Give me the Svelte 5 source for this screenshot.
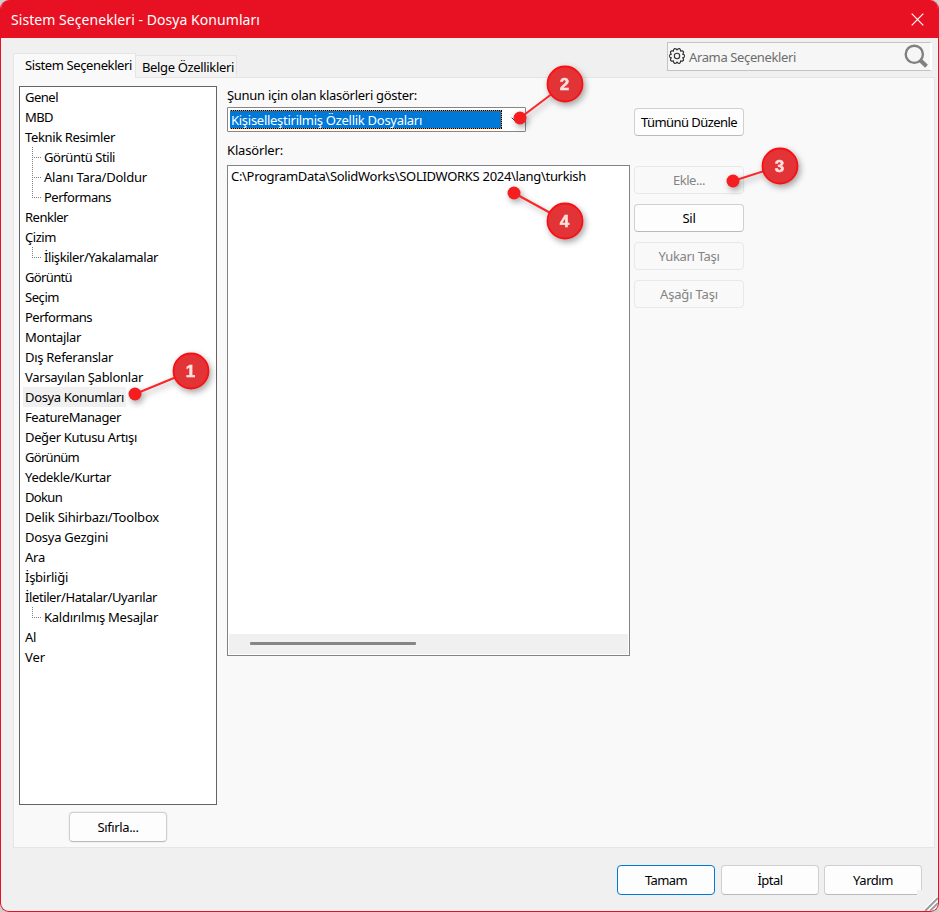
<script lang="ts">
  interface TreeItem {
    label: string;
    child?: boolean;
    last?: boolean;
    width: number;
  }

  // width is the rendered label width in px
  const items: TreeItem[] = [
    { label: 'Genel', width: 33 },
    { label: 'MBD', width: 28 },
    { label: 'Teknik Resimler', width: 90 },
    { label: 'Görüntü Stili', child: true, width: 71 },
    { label: 'Alanı Tara/Doldur', child: true, width: 103 },
    { label: 'Performans', child: true, last: true, width: 67 },
    { label: 'Renkler', width: 43 },
    { label: 'Çizim', width: 31 },
    { label: 'İlişkiler/Yakalamalar', child: true, last: true, width: 114 },
    { label: 'Görüntü', width: 47 },
    { label: 'Seçim', width: 34 },
    { label: 'Performans', width: 67 },
    { label: 'Montajlar', width: 56 },
    { label: 'Dış Referanslar', width: 88 },
    { label: 'Varsayılan Şablonlar', width: 118 },
    { label: 'Dosya Konumları', width: 99 },
    { label: 'FeatureManager', width: 96 },
    { label: 'Değer Kutusu Artışı', width: 112 },
    { label: 'Görünüm', width: 54 },
    { label: 'Yedekle/Kurtar', width: 86 },
    { label: 'Dokun', width: 37 },
    { label: 'Delik Sihirbazı/Toolbox', width: 134 },
    { label: 'Dosya Gezgini', width: 83 },
    { label: 'Ara', width: 20 },
    { label: 'İşbirliği', width: 43 },
    { label: 'İletiler/Hatalar/Uyarılar', width: 132 },
    { label: 'Kaldırılmış Mesajlar', child: true, last: true, width: 114 },
    { label: 'Al', width: 11 },
    { label: 'Ver', width: 20 },
  ];

  const callouts = [
    { n: 1, x: 191, y: 371, dx: 135, dy: 394 },
    { n: 2, x: 565, y: 84, dx: 520, dy: 118 },
    { n: 3, x: 780, y: 166, dx: 733, dy: 181 },
    { n: 4, x: 565, y: 221, dx: 514, dy: 193 },
  ];

  let selected = $state(15);

  // spreads the letters so that a label takes exactly the given width
  function fit(node: HTMLElement, width: number) {
    const natural = node.getBoundingClientRect().width;
    const count = (node.textContent ?? '').length;
    if (count > 0) node.style.letterSpacing = `${(width - natural) / count}px`;
  }

  // gear outline: ten rounded teeth
  const gear = Array.from({ length: 101 }, (_, i) => {
    const a = (i / 100) * Math.PI * 2;
    const r = 6.1 + 1.6 * Math.abs(Math.cos(a * 5));
    return `${i ? 'L' : 'M'}${(8 + r * Math.cos(a)).toFixed(2)} ${(8 + r * Math.sin(a)).toFixed(2)}`;
  }).join('') + 'Z';
</script>

<div class="backdrop">
  <div class="dialog">
    <header class="titlebar">
      <span class="title"><span use:fit={249}>Sistem Seçenekleri - Dosya Konumları</span></span>
      <svg class="close" width="13" height="13" viewBox="0 0 13 13">
        <path d="M.7.7l11.6 11.6M12.3.7L.7 12.3" stroke="#fff" stroke-width="1.2" />
      </svg>
    </header>

    <div class="top">
      <div class="tabs">
        <div class="tab active"><span use:fit={107}>Sistem Seçenekleri</span></div>
        <div class="tab"><span use:fit={92}>Belge Özellikleri</span></div>
      </div>
      <div class="search">
        <svg class="gear" width="16" height="16" viewBox="0 0 16 16" fill="none" stroke="#333">
          <path d={gear} stroke-width="1.2" />
          <circle cx="8" cy="8" r="2.7" stroke-width="1.1" />
        </svg>
        <span class="placeholder"><span use:fit={107}>Arama Seçenekleri</span></span>
        <svg class="lens" width="24" height="24" viewBox="0 0 24 24" fill="none" stroke="#808080">
          <circle cx="10.3" cy="10.3" r="8.6" stroke-width="2.4" />
          <path d="M16.5 16.5l6 5.8" stroke-width="4" />
        </svg>
      </div>
    </div>

    <main class="page">
      <div class="sidebar">
        <ul class="tree">
          {#each items as item, i}
            <!-- svelte-ignore a11y_click_events_have_key_events, a11y_no_noninteractive_element_interactions -->
            <li class:child={item.child} onclick={() => (selected = i)}>
              {#if item.child}
                <svg class="branch" width="10" height="20" viewBox="0 0 10 20">
                  <path d={item.last ? 'M.5 0V11' : 'M.5 0V20'} />
                  <path d="M0 10.5H10" />
                </svg>
              {/if}
              <span class="label" class:selected={i === selected}><span use:fit={item.width}>{item.label}</span></span>
            </li>
          {/each}
        </ul>
        <button class="wide reset"><span use:fit={41}>Sıfırla...</span></button>
      </div>

      <div class="folders">
        <div class="caption"><span use:fit={190}>Şunun için olan klasörleri göster:</span></div>
        <div class="select">
          <div class="value"><span use:fit={191}>Kişiselleştirilmiş Özellik Dosyaları</span></div>
          <svg width="10" height="6" viewBox="0 0 10 6">
            <path d="M.7.7L5 5 9.3.7" fill="none" stroke="#444" />
          </svg>
        </div>
        <div class="caption second"><span use:fit={56}>Klasörler:</span></div>
        <div class="list">
          <div class="path"><span use:fit={355}>C:\ProgramData\SolidWorks\SOLIDWORKS 2024\lang\turkish</span></div>
          <div class="scrollbar"><div class="thumb"></div></div>
        </div>
      </div>

      <div class="actions">
        <button class="edit"><span use:fit={96}>Tümünü Düzenle</span></button>
        <button disabled><span use:fit={32}>Ekle...</span></button>
        <button><span use:fit={13}>Sil</span></button>
        <button disabled><span use:fit={61}>Yukarı Taşı</span></button>
        <button disabled><span use:fit={58}>Aşağı Taşı</span></button>
      </div>
    </main>

    <footer class="footer">
      <button class="wide primary"><span use:fit={42}>Tamam</span></button>
      <button class="wide"><span use:fit={25}>İptal</span></button>
      <button class="wide help"><span use:fit={40}>Yardım</span></button>
    </footer>

    <svg class="grip" width="14" height="14" viewBox="0 0 14 14">
      <path d="M0 14L14 0M5 14L14 5M10 14L14 10" stroke="#fff" stroke-width="3" />
      <path d="M1 14L14 1M6 14L14 6M11 14L14 11" stroke="#999" stroke-width="1.9" />
    </svg>
  </div>

  <svg class="callouts" width="939" height="912" viewBox="0 0 939 912">
    {#each callouts as c}
      <g class="callout">
        <line x1={c.dx} y1={c.dy} x2={c.x} y2={c.y} />
        <circle class="dot" cx={c.dx} cy={c.dy} r="6.5" />
        <circle class="ball" cx={c.x} cy={c.y} r="17.5" />
        <text x={c.x - 0.5} y={c.y + 6}>{c.n}</text>
      </g>
    {/each}
  </svg>
</div>

<style>
  :global(body) {
    margin: 0;
    overflow: hidden;
  }

  .backdrop {
    position: relative;
    width: 939px;
    height: 912px;
    background: #d0d0d0;
    font-family: 'Noto Sans', 'Open Sans', sans-serif;
    font-size: 13px;
    color: #000;
  }

  .dialog {
    position: relative;
    display: flex;
    flex-direction: column;
    box-sizing: border-box;
    width: 939px;
    height: 912px;
    background: #f0f0f0;
    border: 1px solid #e81123;
    border-top: none;
    border-radius: 9px;
    overflow: hidden;
  }

  span {
    white-space: pre;
  }

  .titlebar {
    display: flex;
    align-items: center;
    justify-content: space-between;
    height: 38px;
    flex: none;
    padding: 1px 14px 0 10px;
    box-sizing: border-box;
    background: #e81123;
    color: #fff;
    font-size: 14px;
  }

  .top {
    display: flex;
    justify-content: space-between;
    height: 39px;
    flex: none;
    padding-left: 12px;
    padding-right: 6px;
  }

  .tabs {
    display: flex;
    align-items: flex-end;
  }

  .tab {
    box-sizing: border-box;
    height: 22px;
    line-height: 22px;
    width: 101px;
    padding-left: 6px;
    background: #f3f3f3;
    border: 1px solid #e5e5e5;
    border-left: none;
    border-bottom: none;
  }

  .tab.active {
    position: relative;
    z-index: 1;
    width: 123px;
    height: 25px;
    margin-bottom: -1px;
    padding-left: 11px;
    line-height: 23px;
    background: #f9f9f9;
    border-left: 1px solid #e5e5e5;
  }

  .search {
    display: flex;
    align-items: center;
    box-sizing: border-box;
    width: 265px;
    height: 29px;
    margin-top: 4px;
    padding-left: 1px;
    border: 1px solid #c3c3c3;
    border-right: 2px solid #fff;
    background: #f6f6f6;
  }

  .gear {
    margin-bottom: 1px;
  }

  .placeholder {
    margin-left: 4px;
    flex: 1;
    color: #6d6d6d;
  }

  .lens {
    margin-right: 2px;
    margin-bottom: 1px;
  }

  .page {
    display: flex;
    align-items: flex-start;
    box-sizing: border-box;
    width: 922px;
    height: 771px;
    margin-left: 12px;
    flex: none;
    padding: 8px 0 0 5px;
    background: #f9f9f9;
    border: 1px solid #e5e5e5;
  }

  .tree {
    box-sizing: border-box;
    width: 198px;
    height: 719px;
    margin: 0;
    padding: 0 0 0 3px;
    list-style: none;
    background: #fff;
    border: 1px solid #646464;
  }

  .tree li {
    display: flex;
    height: 20px;
    line-height: 20px;
    cursor: default;
  }

  .tree li.child {
    padding-left: 9px;
  }

  .branch {
    flex: none;
  }

  .branch path {
    stroke: #808080;
    stroke-dasharray: 1 1;
  }

  .label {
    padding: 0 2px;
  }

  .label.selected {
    background: #f0f0f0;
  }

  button {
    box-sizing: border-box;
    width: 110px;
    height: 28px;
    padding: 0;
    font: inherit;
    color: #000;
    background: #fdfdfd;
    border: 1px solid #d0d0d0;
    border-bottom-color: #bababa;
    border-radius: 4px;
  }

  button:disabled {
    color: #838383;
    background: #f9f9f9;
    border-color: #e8e8e8;
  }

  button.wide {
    width: 98px;
    height: 30px;
  }

  .reset {
    display: block;
    margin: 7px 0 0 50px;
    box-shadow: 0 0 0 1px #f0f0f0;
  }

  .folders {
    width: 403px;
    margin-left: 10px;
  }

  .caption {
    height: 21px;
    line-height: 18px;
  }

  .caption.second {
    height: 33px;
    line-height: 37px;
  }

  .select {
    display: flex;
    align-items: center;
    box-sizing: border-box;
    width: 299px;
    height: 25px;
    padding-left: 2px;
    background: #fff;
    border: 1px solid #868686;
    border-radius: 1px;
  }

  .value {
    box-sizing: border-box;
    width: 272px;
    height: 19px;
    margin-right: 9px;
    padding-left: 1px;
    line-height: 21px;
    background:
      repeating-linear-gradient(90deg, #ff8728 0 1px, #000 1px 2px) top / 100% 1px no-repeat,
      repeating-linear-gradient(90deg, #ff8728 0 1px, #000 1px 2px) bottom / 100% 1px no-repeat,
      repeating-linear-gradient(#ff8728 0 1px, #000 1px 2px) right / 1px 100% no-repeat,
      #0078d7;
    color: #fff;
  }

  .list {
    display: flex;
    flex-direction: column;
    justify-content: space-between;
    box-sizing: border-box;
    width: 403px;
    height: 491px;
    padding: 1px;
    background: #fff;
    border: 1px solid #828287;
  }

  .path {
    padding-left: 2px;
    line-height: 19px;
  }

  .scrollbar {
    height: 20px;
    padding: 8px 0 0 21px;
    box-sizing: border-box;
    background: #f0f0f0;
  }

  .thumb {
    width: 166px;
    height: 3px;
    background: #858585;
    border-radius: 1px;
  }

  .actions {
    display: flex;
    flex-direction: column;
    gap: 10px;
    margin: 22px 0 0 4px;
  }

  .edit {
    margin-bottom: 20px;
  }

  .footer {
    display: flex;
    justify-content: flex-end;
    gap: 6px;
    padding: 17px 16px 0 0;
  }

  .primary {
    border-color: #0078d4;
  }

  .help {
    position: relative;
    margin-left: -1px;
  }

  /* the size grip's square cuts into the last button */
  .help::after {
    content: '';
    position: absolute;
    right: -1px;
    bottom: -1px;
    width: 5px;
    height: 5px;
    background: #f0f0f0;
  }

  .grip {
    position: absolute;
    right: 0;
    bottom: 0;
  }

  .callouts {
    position: absolute;
    inset: 0;
    pointer-events: none;
  }

  .callout {
    filter: drop-shadow(2px 3px 3px rgba(0, 0, 0, 0.35));
  }

  .callout line {
    stroke: #f9262a;
    stroke-width: 2;
  }

  .dot {
    fill: #f61d20;
  }

  .ball {
    fill: #e23437;
    stroke: #fa1014;
    stroke-width: 1.8;
  }

  .callout text {
    fill: #ffe0e0;
    stroke: #ffe0e0;
    stroke-width: 0.5;
    font-family: 'Liberation Sans', Arial, sans-serif;
    font-size: 17px;
    font-weight: 700;
    text-anchor: middle;
  }
</style>
